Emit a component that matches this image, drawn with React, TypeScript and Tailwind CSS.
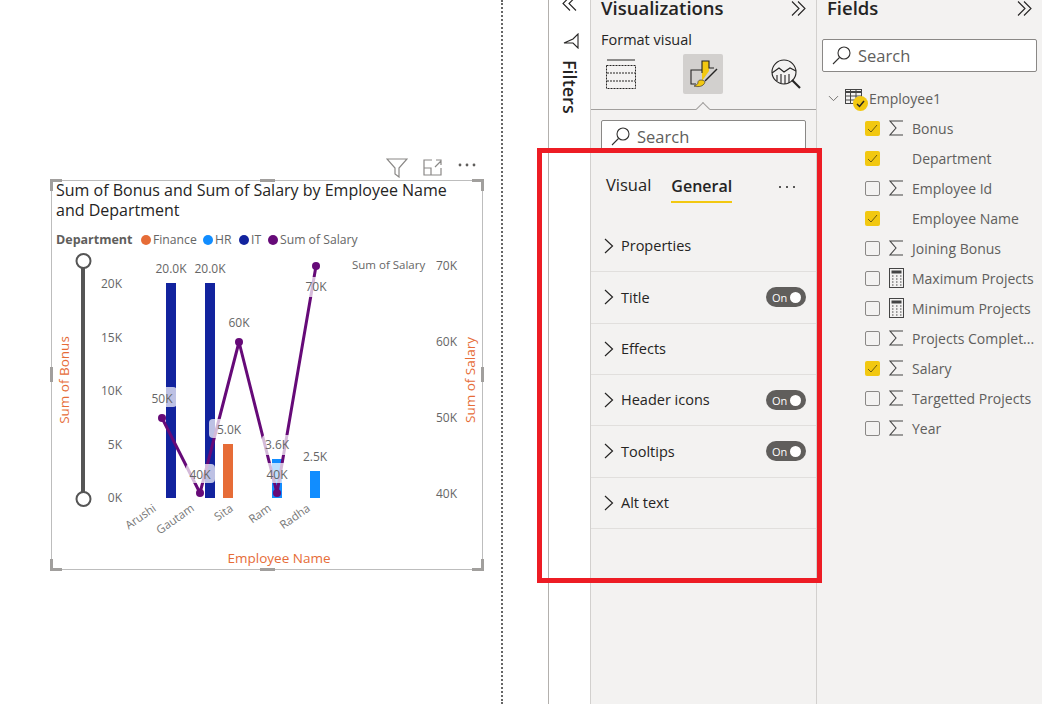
import { ChevronDown } from "lucide-react";

const FONT = "font-['Open_Sans','Noto_Sans',sans-serif]";

const sections = [
  { name: "Properties" },
  { name: "Title", toggle: true },
  { name: "Effects" },
  { name: "Header icons", toggle: true },
  { name: "Tooltips", toggle: true },
  { name: "Alt text" },
];

const fields = [
  { name: "Bonus", checked: true, icon: "sum" },
  { name: "Department", checked: true },
  { name: "Employee Id", icon: "sum" },
  { name: "Employee Name", checked: true },
  { name: "Joining Bonus", icon: "sum" },
  { name: "Maximum Projects", icon: "calc" },
  { name: "Minimum Projects", icon: "calc" },
  { name: "Projects Complet...", icon: "sum" },
  { name: "Salary", checked: true, icon: "sum" },
  { name: "Targetted Projects", icon: "sum" },
  { name: "Year", icon: "sum" },
];

const bars = [
  { x: 166, y: 283, fill: "#12239e" },
  { x: 205, y: 283, fill: "#12239e" },
  { x: 223, y: 444, fill: "#e66c37" },
  { x: 272, y: 459, fill: "#118dff" },
  { x: 310, y: 471, fill: "#118dff" },
];

const linePoints = [
  [162, 418],
  [200, 493],
  [239, 342],
  [277, 493],
  [316, 266],
];

// label backgrounds sit over the bars and the line
const labelBoxes = [
  [148, 387, 29, 20],
  [186, 464, 29, 19],
  [209, 419, 40, 19],
  [262, 435, 30, 20],
  [263, 463, 29, 20],
  [302, 277, 28, 20],
];

const dataLabels = [
  ["20.0K", 171, 273],
  ["20.0K", 210, 273],
  ["60K", 239, 327],
  ["50K", 162, 403],
  ["40K", 200, 479],
  ["5.0K", 229, 434],
  ["3.6K", 277, 449],
  ["40K", 277, 479],
  ["2.5K", 315, 461],
  ["70K", 316, 291],
] as const;

function Handle({ className }: { className: string }) {
  return <div className={`absolute bg-[#a19f9d] ${className}`} />;
}

function Toggle() {
  return (
    <div className="flex h-5 w-10 items-center justify-between rounded-full bg-[#605e5c] pl-[6px] pr-[5px]">
      <span className="text-[11px] leading-none text-white">On</span>
      <span className="h-[11px] w-[11px] rounded-full bg-white" />
    </div>
  );
}

function SearchBox({ className }: { className: string }) {
  return (
    <div className={`flex items-center rounded-[2px] border border-[#8a8886] bg-white ${className}`}>
      <svg width="19" height="19" viewBox="0 0 19 19" fill="none" stroke="#323130" strokeWidth="1.1">
        <circle cx="12" cy="7" r="6" />
        <path d="M7.5 11.5L1 18" />
      </svg>
      <span className="ml-[7px] mt-[2px] text-[16.5px] text-[#605e5c]">Search</span>
    </div>
  );
}

function DoubleChevron({ className }: { className?: string }) {
  return (
    <svg width="15" height="15" viewBox="0 0 15 15" fill="none" stroke="#252423" strokeWidth="1.1" className={className}>
      <path d="M1 0.5l7 7-7 7M7 0.5l7 7-7 7" />
    </svg>
  );
}

function SigmaIcon() {
  return (
    <svg width="14" height="16" viewBox="0 0 14 16" fill="none" stroke="#444" strokeWidth="1.1">
      <path d="M14 1H1l6 7-6 7h13" />
    </svg>
  );
}

function Calculator() {
  return (
    <svg width="15" height="20" viewBox="0 0 15 20" fill="none" stroke="#444" strokeWidth="1">
      <rect x="0.5" y="0.5" width="14" height="19" />
      <rect x="3" y="3" width="9" height="2" fill="#444" />
      <path d="M3 8h1.5M7 8h1.5M11 8h1.5M3 11h1.5M7 11h1.5M11 11h1.5M3 14h1.5M7 14h1.5M11 14h1.5M3 17h1.5M7 17h1.5M11 17h1.5" strokeDasharray="1.5 1" />
    </svg>
  );
}

function FieldRow({ name, checked, icon }: { name: string; checked?: boolean; icon?: string }) {
  return (
    <div className="flex h-[30px] items-center pl-[48px]">
      {checked ? (
        <div className="flex h-[15px] w-[15px] items-center justify-center rounded-[2px] bg-[#f2c811]">
          <svg width="11" height="11" viewBox="0 0 11 11" fill="none" stroke="#6b5a10" strokeWidth="1">
            <path d="M1 6l3 3 6-7" />
          </svg>
        </div>
      ) : (
        <div className="h-[15px] w-[15px] rounded-[2px] border border-[#8a8886]" />
      )}
      <div className="flex w-[32px] justify-center">
        {icon === "sum" && <SigmaIcon />}
        {icon === "calc" && <Calculator />}
      </div>
      <span className="whitespace-nowrap text-[14px] text-[#605e5c]">{name}</span>
    </div>
  );
}

function ChartPlot() {
  const axisText = "#666";
  return (
    <svg width="430" height="320" viewBox="52 248 430 320" className={FONT}>
      {/* slider */}
      <line x1="83" y1="267" x2="83" y2="492" stroke="#555" strokeWidth="4" />
      <circle cx="83.5" cy="261" r="7" fill="#fff" stroke="#555" strokeWidth="2" />
      <circle cx="83.5" cy="499" r="7" fill="#fff" stroke="#555" strokeWidth="2" />

      {[["20K", 288], ["15K", 342], ["10K", 395], ["5K", 449], ["0K", 502]].map(([t, y]) => (
        <text key={t} x="122" y={y} textAnchor="end" fontSize="12" fill={axisText}>{t}</text>
      ))}
      {[["70K", 270], ["60K", 346], ["50K", 422], ["40K", 498]].map(([t, y]) => (
        <text key={t} x="457" y={y} textAnchor="end" fontSize="12" fill={axisText}>{t}</text>
      ))}
      <text x="352" y="269" fontSize="11.5" fill={axisText}>Sum of Salary</text>

      {bars.map((b) => (
        <rect key={b.x} x={b.x} y={b.y} width="10" height={498 - b.y} fill={b.fill} />
      ))}

      <polyline
        points={linePoints.map((p) => p.join(",")).join(" ")}
        fill="none"
        stroke="#660a78"
        strokeWidth="3"
        strokeLinejoin="round"
      />
      {linePoints.map(([x, y]) => (
        <circle key={x} cx={x} cy={y} r="4" fill="#660a78" />
      ))}

      {labelBoxes.map(([x, y, w, h]) => (
        <rect key={`${x}-${y}`} x={x} y={y} width={w} height={h} rx="4" fill="#fff" fillOpacity="0.72" />
      ))}
      {dataLabels.map(([t, x, y]) => (
        <text key={`${t}-${x}`} x={x} y={y} textAnchor="middle" fontSize="12" fill={axisText}>{t}</text>
      ))}

      {[["Arushi", 157, 510], ["Gautam", 195, 510], ["Sita", 234, 510], ["Ram", 272, 510], ["Radha", 311, 510]].map(([t, x, y]) => (
        <text key={t as string} x={x} y={y} textAnchor="end" fontSize="11.5" fill="#777" transform={`rotate(-35 ${x} ${y})`}>{t}</text>
      ))}

      <text x="279" y="563" textAnchor="middle" fontSize="13.5" fill="#e66c37">Employee Name</text>
      <text x="69" y="380" textAnchor="middle" fontSize="13.5" fill="#e66c37" transform="rotate(-90 69 380)">Sum of Bonus</text>
      <text x="475" y="380" textAnchor="middle" fontSize="13.5" fill="#e66c37" transform="rotate(-90 475 380)">Sum of Salary</text>
    </svg>
  );
}

function LegendItem({ color, label, className }: { color: string; label: string; className: string }) {
  return (
    <div className={`flex items-center ${className}`}>
      <span className="h-[10px] w-[10px] rounded-full" style={{ backgroundColor: color }} />
      <span className="ml-[2px] text-[12.2px] text-[#666]">{label}</span>
    </div>
  );
}

function VisualFrame() {
  return (
    <div className="relative h-[390px] w-[432px] border border-[#bdbdbd] bg-white">
      <Handle className="-left-[2px] -top-[2px] h-[3px] w-[12px]" />
      <Handle className="-left-[2px] -top-[2px] h-[12px] w-[3px]" />
      <Handle className="-right-[2px] -top-[2px] h-[3px] w-[12px]" />
      <Handle className="-right-[2px] -top-[2px] h-[12px] w-[3px]" />
      <Handle className="-bottom-[2px] -left-[2px] h-[3px] w-[12px]" />
      <Handle className="-bottom-[2px] -left-[2px] h-[12px] w-[3px]" />
      <Handle className="-bottom-[2px] -right-[2px] h-[3px] w-[12px]" />
      <Handle className="-bottom-[2px] -right-[2px] h-[12px] w-[3px]" />
      <Handle className="-top-[2px] left-[208px] h-[3px] w-[15px]" />
      <Handle className="-bottom-[2px] left-[208px] h-[3px] w-[15px]" />
      <Handle className="-left-[2px] top-[186px] h-[15px] w-[3px]" />
      <Handle className="-right-[2px] top-[186px] h-[15px] w-[3px]" />

      <div className="-mt-[1px] whitespace-nowrap pl-[4px] text-[16px] leading-[20px] text-[#252423]">
        Sum of Bonus and Sum of Salary by Employee Name
        <br />
        and Department
      </div>
      <div className="mt-[12px] flex h-[16px] items-center pl-[4px]">
        <span className="w-[85px] text-[12.5px] font-bold text-[#605e5c]">Department</span>
        <LegendItem color="#e66c37" label="Finance" className="w-[62px]" />
        <LegendItem color="#118dff" label="HR" className="w-[36px]" />
        <LegendItem color="#12239e" label="IT" className="w-[29px]" />
        <LegendItem color="#660a78" label="Sum of Salary" className="" />
      </div>
      <ChartPlot />
    </div>
  );
}

function VisualHeader() {
  return (
    <div className="flex h-[22px] w-[432px] items-start justify-end gap-[15px] pr-[7px]">
      <svg width="22" height="20" viewBox="0 0 22 20" fill="none" stroke="#8a8886" strokeWidth="1.2">
        <path d="M1 1h20l-8 9v9l-4-3v-6z" />
      </svg>
      <svg width="20" height="17" viewBox="0 0 20 17" fill="none" stroke="#8a8886" strokeWidth="1.2" className="mt-[1px]">
        <path d="M9 1H1v15h17V9M1 9h7v7M12 8l6-6M13 1h5v5" />
      </svg>
      <svg width="18" height="4" viewBox="0 0 18 4" fill="#605e5c" className="mt-[5px]">
        <circle cx="2" cy="2" r="1.4" />
        <circle cx="9" cy="2" r="1.4" />
        <circle cx="16" cy="2" r="1.4" />
      </svg>
    </div>
  );
}

function FormatIcons() {
  return (
    <div className="flex h-[55px] items-start pl-[15px]">
      <svg width="30" height="31" viewBox="0 0 30 31" fill="none" stroke="#252423" className="mt-[5px]">
        <path d="M1 1h28" />
        <rect x="0.5" y="6.5" width="29" height="23" strokeDasharray="2 1" />
        <path d="M1 14h28M1 22h28" strokeDasharray="2 1" />
      </svg>
      <div className="ml-[47px] flex h-10 w-10 items-center justify-center rounded-[2px] bg-[#d2d0ce]">
        <svg width="30" height="30" viewBox="0 0 30 30" fill="none">
          <path d="M14 2h7v10l-7 10z" fill="#f2c811" />
          <path d="M14 14V2h7v7h5M14 11H3v14h5" stroke="#252423" strokeWidth="1.1" />
          <path d="M29 10L17 22" stroke="#252423" strokeWidth="1.5" />
          <path d="M13 21c3 0 5 2 3 4-2 3-7 3-10 2 3-1 4-2 4-4 0-1 1-2 3-2z" fill="#f2c811" stroke="#252423" strokeWidth="0.6" />
        </svg>
      </div>
      <svg width="31" height="30" viewBox="0 0 31 30" fill="none" stroke="#252423" strokeWidth="1.1" className="ml-[48px] mt-[5px]">
        <circle cx="13" cy="13" r="12" />
        <path d="M1 14l7-5 5 4 6-4 6 3" />
        <path d="M6 16v6M10 15v9M14 16v9M18 15v9" />
        <path d="M21 21l8 8" strokeWidth="2.2" />
      </svg>
    </div>
  );
}

function VisualizationsPane() {
  return (
    <div className="flex w-[226px] shrink-0 flex-col border-r border-[#d2d0ce] bg-[#f3f2f1]">
      <div className="-mt-[8px] flex h-[31px] items-center justify-between pl-[10px] pr-[10px]">
        <span className="text-[18.5px] font-semibold text-[#252423]">Visualizations</span>
        <DoubleChevron className="mt-[2px]" />
      </div>
      <div className="mt-[7px] h-[24px] pl-[10px] text-[14.5px] font-medium leading-[19px] text-[#252423]">Format visual</div>
      <FormatIcons />
      <div className="relative h-px bg-[#a19f9d]">
        <div className="absolute -top-[5px] left-[107px] h-[10px] w-[10px] rotate-45 border-l border-t border-[#a19f9d] bg-[#f3f2f1]" />
      </div>
      <div className="px-[10px] pt-[10px]">
        <SearchBox className="h-[33px] pl-[9px]" />
      </div>
      <div className="mt-[18px] flex h-[36px] items-start pl-[15px] pr-[20px]">
        <span className="mt-[2px] text-[16.5px] text-[#252423]">Visual</span>
        <span className="ml-[20px] mt-[3px] border-b-[2px] border-[#f2c811] pb-[3px] text-[16px] font-semibold text-[#252423]">General</span>
        <svg width="18" height="4" viewBox="0 0 18 4" fill="#252423" className="ml-auto mt-[14px]">
          <circle cx="2" cy="2" r="1" />
          <circle cx="9" cy="2" r="1" />
          <circle cx="16" cy="2" r="1" />
        </svg>
      </div>
      <div className="mt-[14px]">
        {sections.map((s) => (
          <div key={s.name} className="flex h-[51.33px] items-center border-b border-[#e1dfdd] pl-[13px] pr-[10px]">
            <svg width="10" height="16" viewBox="0 0 10 16" fill="none" stroke="#252423" strokeWidth="1.2">
              <path d="M1 1l7.5 7L1 15" />
            </svg>
            <span className="ml-[7px] text-[14.5px] font-medium text-[#252423]">{s.name}</span>
            {s.toggle && (
              <div className="ml-auto">
                <Toggle />
              </div>
            )}
          </div>
        ))}
      </div>
    </div>
  );
}

function FieldsPane() {
  return (
    <div className="flex flex-1 flex-col bg-[#f3f2f1]">
      <div className="-mt-[8px] flex h-[31px] items-center justify-between pl-[10px] pr-[10px]">
        <span className="text-[18.5px] font-semibold text-[#252423]">Fields</span>
        <DoubleChevron className="mt-[2px]" />
      </div>
      <div className="mt-[16px] px-[5px]">
        <SearchBox className="h-[33px] pl-[9px]" />
      </div>
      <div className="mt-[11px] flex h-[30px] items-center pl-[8px]">
        <ChevronDown size={17} strokeWidth={1.2} className="text-[#605e5c]" />
        <div className="relative ml-[3px] h-[18px] w-[24px]">
          <svg width="18" height="15" viewBox="0 0 18 15" fill="none" stroke="#444" strokeWidth="1">
            <rect x="0.5" y="0.5" width="16" height="14" />
            <path d="M0.5 3h16" strokeWidth="2" />
            <path d="M0.5 7h16M0.5 11h16M5.5 1v14M11 1v14" />
          </svg>
          <div className="absolute left-[8px] top-[7px] flex h-[15px] w-[15px] items-center justify-center rounded-full bg-[#f2c811]">
            <svg width="9" height="9" viewBox="0 0 9 9" fill="none" stroke="#252423" strokeWidth="1.5">
              <path d="M1 5l2.5 2.5L8 2" />
            </svg>
          </div>
        </div>
        <span className="text-[14px] text-[#605e5c]">Employee1</span>
      </div>
      {fields.map((f) => (
        <FieldRow key={f.name} {...f} />
      ))}
    </div>
  );
}

function FiltersPane() {
  return (
    <div className="flex w-[43px] shrink-0 flex-col items-center border-l border-r border-l-[#b3b0ad] border-r-[#d2d0ce] bg-white">
      <DoubleChevron className="-mt-[4px] rotate-180" />
      <svg width="16" height="16" viewBox="0 0 16 16" fill="none" stroke="#252423" strokeWidth="1.1" className="ml-[3px] mt-[22px]">
        <path d="M15 1v14l-5-5H1l9-4z" />
      </svg>
      <span className="mt-[11px] text-[18px] font-semibold leading-[20px] text-[#252423] [writing-mode:vertical-rl]">Filters</span>
    </div>
  );
}

export default function App() {
  return (
    <div className={`relative flex h-[704px] w-[1042px] overflow-hidden bg-white ${FONT}`}>
      <div className="w-[503px] shrink-0 border-r-2 border-dotted border-[#666] pl-[51px] pt-[158px]">
        <VisualHeader />
        <VisualFrame />
      </div>
      <div className="w-[45px] shrink-0" />
      <FiltersPane />
      <VisualizationsPane />
      <FieldsPane />
      <div className="absolute left-[537px] top-[148px] h-[435px] w-[285px] border-[5px] border-[#ed1c24]" />
    </div>
  );
}
